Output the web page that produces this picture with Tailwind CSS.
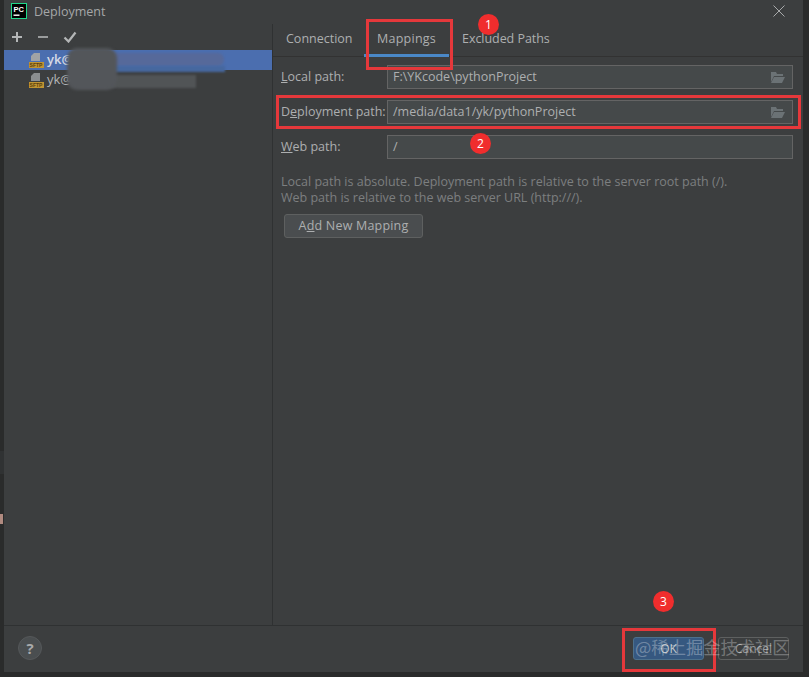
<!doctype html>
<html>
<head>
<meta charset="utf-8">
<script src="https://cdn.jsdelivr.net/npm/@tailwindcss/browser@4"></script>
</head>
<body class="m-0 bg-[#2a2b2b]">
<div class="relative w-[809px] h-[677px] overflow-hidden bg-[#2a2b2b] font-['Open_Sans','Noto_Sans',sans-serif] text-[12.5px] text-[#adafb0]">
  <!-- page behind the dialog -->
  <div class="absolute left-0 top-[451px] w-[4px] h-[23px] bg-[#303233]"></div>
  <div class="absolute left-0 top-[514px] w-[3px] h-[10px] bg-[#b08a80]"></div>

  <div class="ml-[4px] w-[799px] h-[672px] flex flex-col bg-[#3c3e3f]">
    <!-- title -->
    <div class="h-[24px] flex items-start shrink-0 pl-[7px] pr-[17px]">
      <svg width="16" height="16" viewBox="0 0 16 16" class="shrink-0 mt-[3px]">
        <rect x="0.5" y="0.5" width="15" height="15" fill="#000" stroke="#21d789"/>
        <text x="2.5" y="8.5" font-size="7.5" font-weight="700" fill="#fff" font-family="Liberation Sans">PC</text>
        <rect x="2.5" y="11.5" width="6" height="1.4" fill="#fff"/>
      </svg>
      <span class="ml-[7px] mt-[3px] leading-[18px] text-[12.5px] text-[#a5a7a8]">Deployment</span>
      <svg width="14" height="14" viewBox="0 0 14 14" class="ml-auto mt-[4px]"><path d="M1.5 1.5 12.5 12.5M12.5 1.5 1.5 12.5" stroke="#a8aaab" stroke-width="1" fill="none"/></svg>
    </div>

    <div class="flex-1 flex min-h-0">
      <!-- left column -->
      <div class="w-[268px] shrink-0 flex flex-col">
        <div class="h-[26px] flex items-center pl-[7px] gap-[14px]">
          <svg width="12" height="12" viewBox="0 0 12 12"><path d="M6 1v10M1 6h10" stroke="#b4b6b7" stroke-width="2" fill="none"/></svg>
          <svg width="12" height="12" viewBox="0 0 12 12"><path d="M1 6h10" stroke="#9a9c9d" stroke-width="2" fill="none"/></svg>
          <svg width="14" height="12" viewBox="0 0 14 12"><path d="M1.5 6.5 5.5 10.5 12.5 1.5" stroke="#b4b6b7" stroke-width="2.2" fill="none"/></svg>
        </div>
        <div class="relative">
          <div class="h-[20px] bg-[#4b6eaf] flex items-center pl-[25px] gap-[3px] text-[#d6dbe6] font-semibold text-[13px]">
            <svg width="15" height="16" viewBox="0 0 15 16"><path d="M5 1h6v8H2V4z" fill="#a0a3a5"/><rect x="0" y="10" width="15" height="6" fill="#c09432"/><text x="0.6" y="15" font-size="5" font-weight="700" fill="#5a3f0c" font-family="Liberation Sans">SFTP</text></svg>
            <span>yk@</span>
          </div>
          <div class="h-[20px] flex items-center pl-[25px] gap-[3px] text-[13px] text-[#b4b6b7]">
            <svg width="15" height="16" viewBox="0 0 15 16"><path d="M5 1h6v8H2V4z" fill="#8b8e90"/><rect x="0" y="10" width="15" height="6" fill="#c09432"/><text x="0.6" y="15" font-size="5" font-weight="700" fill="#5a3f0c" font-family="Liberation Sans">SFTP</text></svg>
            <span>yk@</span>
            <span class="text-[11px] text-[#8d9091]">1</span>
          </div>
          <!-- scribbles hiding the host names -->
          <div class="absolute left-[84px] top-[3px] w-[136px] h-[13px] rounded-[6px] bg-[#56699a] blur-[1px]"></div>
          <div class="absolute left-[96px] top-[16px] w-[125px] h-[6px] bg-[#46689f] blur-[1px]"></div>
          <div class="absolute left-[76px] top-[25px] w-[116px] h-[13px] bg-[#515456] blur-[1px]"></div>
          <div class="absolute left-[63px] top-[-2px] w-[50px] h-[42px] rounded-[10px] bg-[#53565a] blur-[1.5px]"></div>
        </div>
      </div>
      <div class="w-px bg-[#2f3132] shrink-0"></div>

      <!-- right column -->
      <div class="flex-1 min-w-0 flex flex-col">
        <div class="h-[33px] border-b border-[#323232] flex items-stretch shrink-0">
          <div class="w-[91px] pl-[13px] flex items-center pb-[2px]">Connection</div>
          <div class="relative w-[85px] pl-[13px] flex items-center pb-[2px] tracking-[0.25px]">Mappings<span class="absolute left-0 right-0 -bottom-px h-[3px] bg-[#4a88c7]"></span></div>
          <div class="pl-[13px] flex items-center pb-[2px] tracking-[-0.05px]">Excluded Paths</div>
        </div>

        <div class="pl-[8px] pr-[10px] pt-[8px] flex flex-col gap-[11px]">
          <div class="flex items-center h-[24px]">
            <label class="w-[106px] shrink-0"><span class="underline">L</span>ocal path:</label>
            <div class="flex-1 h-[24px] border border-[#646464] bg-[#45494a] flex items-center pl-[5px] pr-[6px]">
              <span>F:\YKcode\pythonProject</span>
              <svg width="16" height="13" viewBox="0 0 16 13" class="ml-auto"><path d="M1 1h5l1 2h6v2H4L1 11z" fill="#6b7275"/><path d="M4 6h11l-3 6H1z" fill="#6b7275"/></svg>
            </div>
          </div>
          <div class="flex items-center h-[24px]">
            <label class="w-[106px] shrink-0">D<span class="underline">e</span>ployment path:</label>
            <div class="flex-1 h-[24px] border border-[#646464] bg-[#45494a] flex items-center pl-[5px] pr-[6px]">
              <span>/media/data1/yk/pythonProject</span>
              <svg width="16" height="13" viewBox="0 0 16 13" class="ml-auto"><path d="M1 1h5l1 2h6v2H4L1 11z" fill="#6b7275"/><path d="M4 6h11l-3 6H1z" fill="#6b7275"/></svg>
            </div>
          </div>
          <div class="flex items-center h-[24px]">
            <label class="w-[106px] shrink-0"><span class="underline">W</span>eb path:</label>
            <div class="flex-1 h-[24px] border border-[#646464] bg-[#45494a] flex items-center pl-[5px] pr-[6px]">
              <span>/</span>
            </div>
          </div>
        </div>

        <div class="pl-[8px] mt-[15px] text-[#7c7f80] leading-[16px]">
          <p>Local path is absolute. Deployment path is relative to the server root path (/).</p>
          <p>Web path is relative to the web server URL (http:///).</p>
        </div>
        <div class="pl-[11px] mt-[8px]">
          <button class="w-[139px] h-[24px] border border-[#5e6060] rounded-[3px] bg-[#4a4d4f] text-[#adafb0] text-[12.5px] tracking-[0.2px]">A<span class="underline">d</span>d New Mapping</button>
        </div>
      </div>
    </div>

    <!-- footer -->
    <div class="h-[47px] shrink-0 border-t border-[#2f3132] flex items-start pl-[14px] pr-[14px] pt-[10px]">
      <div class="w-[24px] h-[24px] rounded-full bg-[#4a4e50] border border-[#55585a] flex items-center justify-center text-[15px] font-bold text-[#a8aaab]">?</div>
      <div class="ml-auto flex gap-[14px] mt-[1px]">
        <button class="w-[71px] h-[23px] rounded-[3px] bg-[#365880] border border-[#4c708c] text-[#c4c8cc] text-[12px]">OK</button>
        <button class="w-[71px] h-[23px] rounded-[3px] bg-[#3c3e3f] border border-[#5e6060] text-[#9a9c9d] text-[12px]">Cancel</button>
      </div>
    </div>
  </div>

  <!-- annotations -->
  <div class="absolute left-[366px] top-[19px] w-[87px] h-[51px] border-[3px] border-[#e5383b]"></div>
  <div class="absolute left-[276px] top-[95px] w-[525px] h-[34px] border-[3px] border-[#e5383b]"></div>
  <div class="absolute left-[622px] top-[628px] w-[94px] h-[44px] border-[3px] border-[#e5383b]"></div>
  <div class="absolute left-[478px] top-[14px] w-[21px] h-[21px] rounded-full bg-[#f02d2d] text-white text-[12px] flex items-center justify-center">1</div>
  <div class="absolute left-[470px] top-[133px] w-[21px] h-[21px] rounded-full bg-[#f02d2d] text-white text-[12px] flex items-center justify-center">2</div>
  <div class="absolute left-[653px] top-[591px] w-[21px] h-[21px] rounded-full bg-[#f02d2d] text-white text-[12px] flex items-center justify-center">3</div>
  <div class="absolute left-[635px] top-[635px] whitespace-nowrap text-[17.3px] leading-[24px] text-white/30 font-['Noto_Sans_CJK_SC',sans-serif]">@稀土掘金技术社区</div>
</div>
</body>
</html>
